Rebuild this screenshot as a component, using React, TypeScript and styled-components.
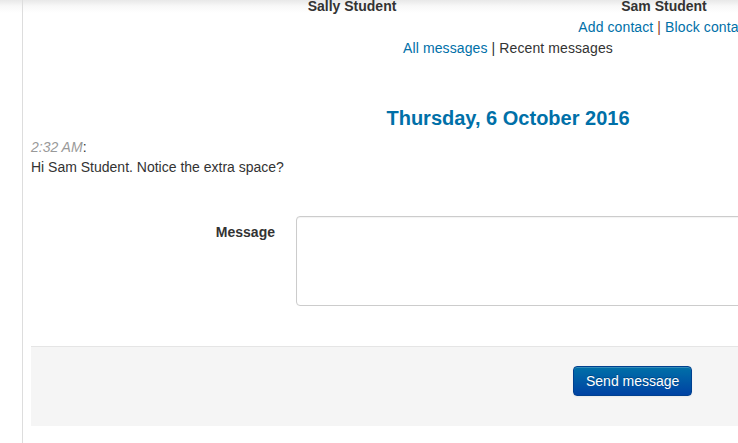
import styled, { createGlobalStyle } from "styled-components";

const GlobalStyle = createGlobalStyle`
  html, body {
    margin: 0;
    padding: 0;
  }
  body {
    font-family: "Liberation Sans", Helvetica, Arial, sans-serif;
    font-size: 14px;
    line-height: 20px;
    color: #333;
    background: #fff;
    overflow: hidden;
  }
`;

const Page = styled.div`
  width: 738px;
  height: 443px;
  overflow: hidden;
  display: flex;
  padding-left: 22px;
  box-sizing: border-box;
  background: linear-gradient(#e8e8e8 0, #f8f8f8 6px, #fff 13px) no-repeat;
`;

const Panel = styled.div`
  flex: 0 0 954px;
  border-left: 1px solid #ddd;
  padding-left: 8px;
`;

const Header = styled.div`
  margin-top: -4px;
`;

const UserRow = styled.div`
  display: grid;
  grid-template-columns: 312px 312px;
  justify-content: center;
  text-align: center;
`;

const UserColumn = styled.div`
  display: flex;
  flex-direction: column;
  align-items: center;
  white-space: nowrap;
`;

const UserName = styled.div`
  font-weight: bold;
`;

const LinkRow = styled.div<{ $centered?: boolean }>`
  white-space: nowrap;
  margin-top: 1px;
  letter-spacing: 0.1px;
  text-align: ${({ $centered }) => ($centered ? "center" : "inherit")};
`;

const Link = styled.a`
  color: #0070a8;
  text-decoration: none;
`;

const Separator = styled.span<{ $tone?: "red" }>`
  color: ${({ $tone }) => ($tone === "red" ? "#8a3a22" : "#333")};
`;

const DateHeading = styled.h2`
  margin: 49px 0 0;
  font-size: 20px;
  line-height: 22px;
  font-weight: bold;
  color: #0070a8;
  text-align: center;
`;

const MessageBlock = styled.div`
  margin-top: 8px;
`;

const Time = styled.span`
  color: #999;
  font-style: italic;
`;

const FormRow = styled.div`
  display: flex;
  margin-top: 39px;
`;

const Label = styled.label`
  flex: 0 0 244px;
  text-align: right;
  font-weight: bold;
  padding-top: 6px;
`;

const TextArea = styled.textarea`
  margin: 0 0 0 21px;
  flex: 0 0 600px;
  height: 90px;
  box-sizing: border-box;
  border: 1px solid #ccc;
  border-radius: 4px;
  box-shadow: inset 0 1px 1px rgba(0, 0, 0, 0.05);
  resize: none;
  font: inherit;
  padding: 4px 6px;
`;

const FormActions = styled.div`
  margin-top: 40px;
  border-top: 1px solid #e5e5e5;
  background: #f5f5f5;
  padding: 19px 20px 30px 542px;
`;

const PrimaryButton = styled.button`
  font-family: "Liberation Sans", Helvetica, Arial, sans-serif;
  font-size: 14px;
  line-height: 20px;
  padding: 4px 12px;
  color: #fff;
  text-shadow: 0 -1px 0 rgba(0, 0, 0, 0.25);
  background: linear-gradient(#0070a8, #0042a3);
  border: 1px solid #00408f;
  border-radius: 4px;
  box-shadow: inset 0 1px 0 rgba(255, 255, 255, 0.2), 0 1px 2px rgba(0, 0, 0, 0.05);
  cursor: pointer;
`;

export default function App() {
  return (
    <>
      <GlobalStyle />
      <Page>
        <Panel>
          <Header>
            <UserRow>
              <UserColumn>
                <UserName>Sally Student</UserName>
              </UserColumn>
              <UserColumn>
                <UserName>Sam Student</UserName>
                <LinkRow>
                  <Link href="#">Add contact</Link> <Separator $tone="red">|</Separator>{" "}
                  <Link href="#">Block contact</Link>
                </LinkRow>
              </UserColumn>
            </UserRow>
            <LinkRow $centered>
              <Link href="#">All messages</Link> <Separator>|</Separator> Recent messages
            </LinkRow>
          </Header>

          <DateHeading>Thursday, 6 October 2016</DateHeading>

          <MessageBlock>
            <div>
              <Time>2:32 AM</Time>:
            </div>
            <div>Hi Sam Student. Notice the extra space?</div>
          </MessageBlock>

          <FormRow>
            <Label htmlFor="message">Message</Label>
            <TextArea id="message" />
          </FormRow>

          <FormActions>
            <PrimaryButton type="button">Send message</PrimaryButton>
          </FormActions>
        </Panel>
      </Page>
    </>
  );
}
